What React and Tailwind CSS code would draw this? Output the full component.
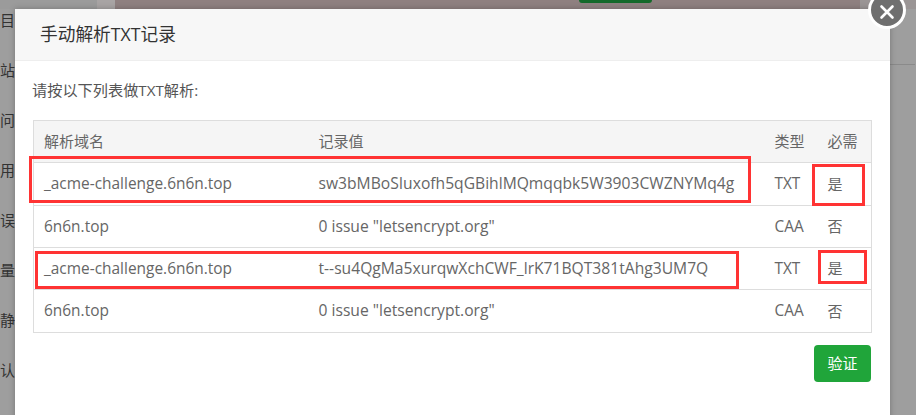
import React from "react";

const rows = [
  { domain: "_acme-challenge.6n6n.top", value: "sw3bMBoSIuxofh5qGBihlMQmqqbk5W3903CWZNYMq4g", type: "TXT", must: "是", height: "h-[43px]" },
  { domain: "6n6n.top", value: '0 issue "letsencrypt.org"', type: "CAA", must: "否", height: "h-[42px]" },
  { domain: "_acme-challenge.6n6n.top", value: "t--su4QgMa5xurqwXchCWF_lrK71BQT381tAhg3UM7Q", type: "TXT", must: "是", height: "h-[42px]" },
  { domain: "6n6n.top", value: '0 issue "letsencrypt.org"', type: "CAA", must: "否", height: "h-[43px]" },
];

const sideLabels = ["目", "站", "问", "用", "误", "量", "静", "认"];

export default function App() {
  return (
    <div className="relative h-[415px] w-[916px] overflow-hidden bg-[#9e9e9e] font-['Open_Sans','Noto_Sans_CJK_SC',sans-serif] text-[15px] text-[#666666]">
      {/* Page behind the overlay */}
      <div className="flex h-[9px] bg-[#8f8080]">
        <div className="w-[97px] bg-[#9b9b9b]" />
        <div className="w-[18px] bg-[#a8a4a4]" />
        <div className="ml-[464px] h-[3px] w-[73px] rounded-b-[3px] bg-[#14692a]" />
        <div className="ml-auto w-[56px] bg-[#9a9595]" />
      </div>
      <div className="flex flex-col">
        {sideLabels.map((label, i) => (
          <div key={i} className="flex h-[50px] items-center text-[15px] leading-none text-[#333333] first:-mt-[14px]">
            {label}
          </div>
        ))}
      </div>
      <div className="absolute left-[890px] top-[64px] h-px w-[25px] bg-[#8a8a8a]" />

      {/* Modal */}
      <div className="absolute left-[15px] top-[9px] h-[420px] w-[875px] bg-white shadow-[0_0_6px_rgba(0,0,0,0.25)]">
        <div className="flex h-[52px] items-center border-b border-[#eeeeee] bg-[#f7f7f7] pl-[25px] text-[17.7px] text-[#333333]">
          手动解析TXT记录
        </div>
        <div className="pl-[18px]">
          <p className="mt-[19px] -ml-px h-[40px] text-[15.2px] leading-[20px] text-[#555555]">请按以下列表做TXT解析:</p>
          <table className="w-[838px] table-fixed border-collapse border border-[#dddddd]">
            <colgroup>
              <col className="w-[275px]" />
              <col className="w-[455px]" />
              <col className="w-[53px]" />
              <col className="w-[55px]" />
            </colgroup>
            <thead>
              <tr className="h-[42px] border-b border-[#dddddd] bg-[#f5f5f5]">
                <th className="pl-[10px] text-left font-normal">解析域名</th>
                <th className="pl-[10px] text-left font-normal">记录值</th>
                <th className="pl-[11px] text-left font-normal">类型</th>
                <th className="pl-[11px] text-left font-normal">必需</th>
              </tr>
            </thead>
            <tbody>
              {rows.map((row, i) => (
                <tr key={i} className={`${row.height} border-b border-[#dddddd]`}>
                  <td className="pl-[10px] text-[15.45px]">{row.domain}</td>
                  <td className="pl-[10px] text-[15.65px] whitespace-nowrap">{row.value}</td>
                  <td className="pl-[11px] text-[15.4px]">{row.type}</td>
                  <td className="pl-[11px]">{row.must}</td>
                </tr>
              ))}
            </tbody>
          </table>
          <div className="mt-[12px] flex w-[838px] justify-end">
            <button className="h-[37px] w-[57px] rounded-[4px] bg-[#20a53a] text-[15px] text-white">验证</button>
          </div>
        </div>
      </div>

      {/* Close button */}
      <div className="absolute left-[868px] top-[-9px] flex h-[38px] w-[38px] items-center justify-center rounded-full border-[3px] border-white bg-[#6f6f6f]">
        <svg width="16" height="16" viewBox="0 0 16 16" fill="none" stroke="white" strokeWidth="2.6" strokeLinecap="round" className="mt-[3px]">
          <path d="M2.5 2.5 13.5 13.5M13.5 2.5 2.5 13.5" />
        </svg>
      </div>

      {/* Red annotation boxes */}
      <div className="absolute left-[29px] top-[156px] h-[47px] w-[722px] border-[3px] border-[#ff3333]" />
      <div className="absolute left-[35px] top-[251px] h-[38px] w-[704px] border-[3px] border-[#ff3333]" />
      <div className="absolute left-[812px] top-[164px] h-[42px] w-[53px] border-[3px] border-[#ff3333]" />
      <div className="absolute left-[818px] top-[250px] h-[34px] w-[49px] border-[3px] border-[#ff3333]" />
    </div>
  );
}
